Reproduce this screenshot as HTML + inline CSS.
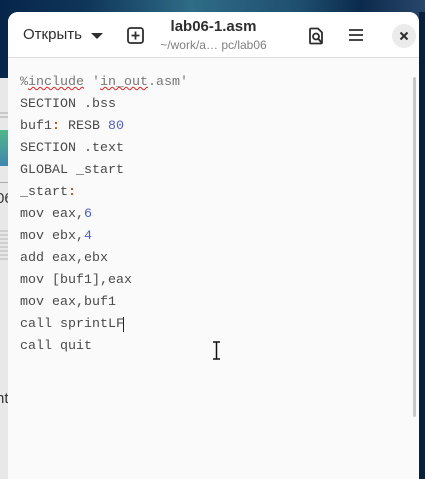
<!DOCTYPE html>
<html style="overflow:hidden;width:425px;height:479px"><head><meta charset="utf-8"><style>
*{margin:0;padding:0;box-sizing:border-box}
body{width:425px;height:479px;overflow:hidden;position:relative;background:#0a2a4a;font-family:"Liberation Sans",sans-serif}
.bg{position:absolute;left:0;top:0;width:425px;height:479px;background:linear-gradient(90deg,#06264a 0%,#0f3558 20%,#2f6c86 45%,#1f4f6f 70%,#0b2a4c 85%,#28476a 100%)}
.right{position:absolute;left:419px;top:12px;width:6px;height:467px;background:#07203f}
.left{position:absolute;left:0;top:78px;width:8px;height:401px;background:#e8e8e8}
.lg{position:absolute;left:0;top:112px;width:8px;height:6px;background:repeating-linear-gradient(#c8c8c8 0 2px,#e8e8e8 2px 4px)}
.lc{position:absolute;left:0;top:130px;width:8px;height:36px;background:linear-gradient(#4fb88a,#3f86b0)}
.lg2{position:absolute;left:0;top:182px;width:8px;height:1px;background:#aaa}
.lg3{position:absolute;left:0;top:230px;width:8px;height:30px;background:repeating-linear-gradient(#cfcfcf 0 2px,#e8e8e8 2px 4px)}
.lt{position:absolute;left:-4px;top:190px;font-size:15px;color:#333}
.lt2{position:absolute;left:-4px;top:390px;font-size:15px;color:#333}
.win{position:absolute;left:8px;top:12px;width:411px;height:467px;background:#fafafa;border-radius:10px 10px 0 0;overflow:hidden}
.hdr{height:46px;background:#fff;border-bottom:1px solid #dedede;position:relative}
.open{position:absolute;left:15px;top:14px;font-size:15px;color:#2e2e2e}
.tri{position:absolute;left:83px;top:21px;border-left:6px solid transparent;border-right:6px solid transparent;border-top:6px solid #2e2e2e}
.title{position:absolute;left:0;width:411px;top:6px;text-align:center;font-weight:bold;font-size:15px;color:#2e2e2e}
.sub{position:absolute;left:0;width:411px;top:26px;text-align:center;font-size:12px;color:#808080}
.close{position:absolute;left:384px;top:12px;width:24px;height:24px;border-radius:50%;background:#ebebeb}
.code{position:absolute;left:12px;top:60px;font-family:"Liberation Mono",monospace;font-size:13.33px;line-height:22px;color:#4a4a4a;white-space:pre}
.o{color:#c04a0a;font-weight:bold}.n{color:#5060c0}
.sq{text-decoration:underline wavy #d22;text-decoration-thickness:1px}
.inc{color:#777}
.sb{position:absolute;left:405px;top:65px;width:3px;height:340px;background:#c8c8c8;border-radius:2px}
</style></head><body>
<div class="bg"></div><div class="right"></div>
<div class="left"></div><div class="lg"></div><div class="lc"></div><div class="lg2"></div><div class="lg3"></div>
<div class="lt">06</div><div class="lt2">nt</div>
<div class="win">
<div class="hdr">
<div class="open">Открыть</div><div class="tri"></div>
<svg style="position:absolute;left:119px;top:15px" width="17" height="17" viewBox="0 0 17 17"><rect x="1" y="1" width="15" height="15" rx="2.5" fill="none" stroke="#2e2e2e" stroke-width="1.8"/><path d="M8.5 4.5v8M4.5 8.5h8" stroke="#2e2e2e" stroke-width="1.8"/></svg>
<div class="title">lab06-1.asm</div>
<div class="sub">~/work/a… pc/lab06</div>
<svg style="position:absolute;left:300px;top:15px" width="17" height="18" viewBox="0 0 17 18"><path d="M3 1.5h7l4 4v10a1 1 0 0 1-1 1H3a1 1 0 0 1-1-1v-13a1 1 0 0 1 1-1z" fill="none" stroke="#2e2e2e" stroke-width="1.8"/><circle cx="8" cy="9.5" r="3" fill="none" stroke="#2e2e2e" stroke-width="1.8"/><path d="M10 11.5l4 4.5" stroke="#2e2e2e" stroke-width="2"/></svg>
<svg style="position:absolute;left:340px;top:16px" width="16" height="14" viewBox="0 0 16 14"><path d="M1 2h14M1 7h14M1 12h14" stroke="#2e2e2e" stroke-width="1.8"/></svg>
<div class="close"><svg style="position:absolute;left:7px;top:7px" width="10" height="10" viewBox="0 0 10 10"><path d="M1.5 1.5l7 7M8.5 1.5l-7 7" stroke="#2e2e2e" stroke-width="2"/></svg></div>
</div>
<div class="code"><span class="inc">%<span class="sq">include</span> '<span class="sq">in_out</span>.asm'</span>
SECTION .bss
buf1<span class="o">:</span> RESB <span class="n">80</span>
SECTION .text
GLOBAL _start
_start<span class="o">:</span>
mov eax,<span class="n">6</span>
mov ebx,<span class="n">4</span>
add eax,ebx
mov [buf1],eax
mov eax,buf1
call sprintLF<span style="border-left:1px solid #222;margin-left:-1px"></span>
call quit</div>
<div class="sb"></div>
<svg style="position:absolute;left:204px;top:329px" width="9" height="19" viewBox="0 0 9 19"><path d="M1 1h7M1 18h7M4.5 1v17" stroke="#111" stroke-width="1.5" fill="none"/></svg>
</div>
</body></html>
